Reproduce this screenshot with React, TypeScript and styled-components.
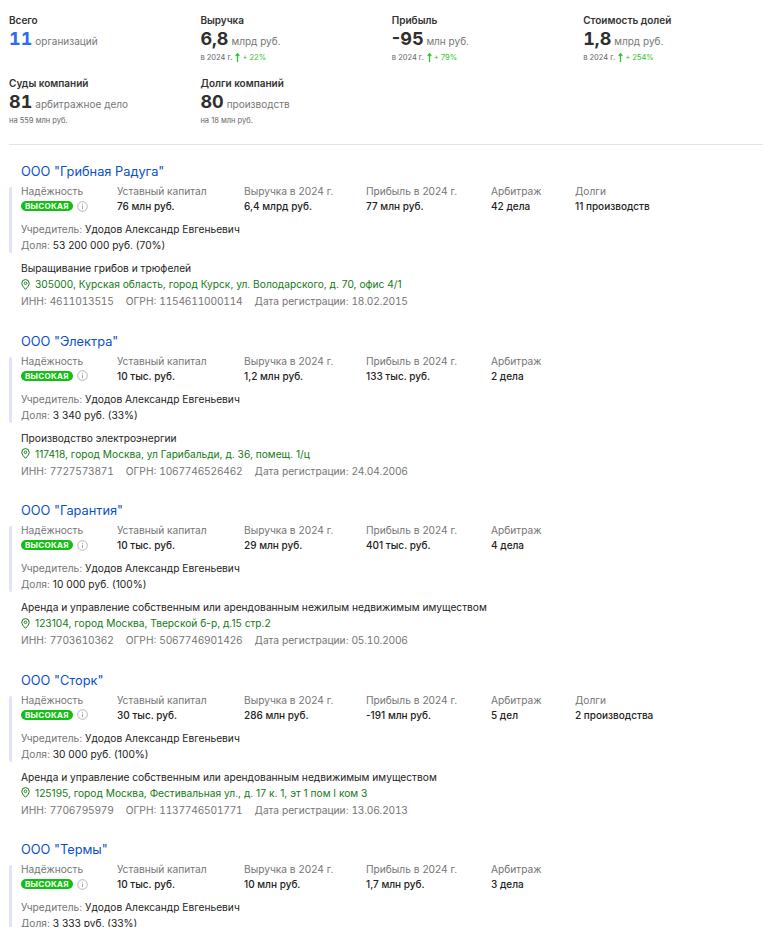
import React from "react";
import styled, { createGlobalStyle } from "styled-components";

const GlobalStyle = createGlobalStyle`
  html, body {
    margin: 0;
    padding: 0;
    background: #fff;
    overflow: hidden;
  }
  body {
    font-family: Inter, "Noto Sans", "Liberation Sans", sans-serif;
    color: #222;
  }
`;

const stats = [
  { label: "Всего", num: "11", unit: "организаций", accent: true },
  { label: "Выручка", num: "6,8", unit: "млрд руб.", year: "в 2024 г.", delta: "+ 22%" },
  { label: "Прибыль", num: "-95", unit: "млн руб.", year: "в 2024 г.", delta: "+ 79%" },
  { label: "Стоимость долей", num: "1,8", unit: "млрд руб.", year: "в 2024 г.", delta: "+ 254%" },
  { label: "Суды компаний", num: "81", unit: "арбитражное дело", year: "на 559 млн руб." },
  { label: "Долги компаний", num: "80", unit: "производств", year: "на 18 млн руб." },
];

const companies = [
  {
    name: 'ООО "Грибная Радуга"', capital: "76 млн руб.", revenue: "6,4 млрд руб.", profit: "77 млн руб.",
    courts: "42 дела", debts: "11 производств", share: "53 200 000 руб. (70%)",
    activity: "Выращивание грибов и трюфелей",
    address: "305000, Курская область, город Курск, ул. Володарского, д. 70, офис 4/1",
    inn: "4611013515", ogrn: "1154611000114", date: "18.02.2015",
  },
  {
    name: 'ООО "Электра"', capital: "10 тыс. руб.", revenue: "1,2 млн руб.", profit: "133 тыс. руб.",
    courts: "2 дела", share: "3 340 руб. (33%)",
    activity: "Производство электроэнергии",
    address: "117418, город Москва, ул Гарибальди, д. 36, помещ. 1/ц",
    inn: "7727573871", ogrn: "1067746526462", date: "24.04.2006",
  },
  {
    name: 'ООО "Гарантия"', capital: "10 тыс. руб.", revenue: "29 млн руб.", profit: "401 тыс. руб.",
    courts: "4 дела", share: "10 000 руб. (100%)",
    activity: "Аренда и управление собственным или арендованным нежилым недвижимым имуществом",
    address: "123104, город Москва, Тверской б-р, д.15 стр.2",
    inn: "7703610362", ogrn: "5067746901426", date: "05.10.2006",
  },
  {
    name: 'ООО "Сторк"', capital: "30 тыс. руб.", revenue: "286 млн руб.", profit: "-191 млн руб.",
    courts: "5 дел", debts: "2 производства", share: "30 000 руб. (100%)",
    activity: "Аренда и управление собственным или арендованным недвижимым имуществом",
    address: "125195, город Москва, Фестивальная ул., д. 17 к. 1, эт 1 пом I ком 3",
    inn: "7706795979", ogrn: "1137746501771", date: "13.06.2013",
  },
  {
    name: 'ООО "Термы"', capital: "10 тыс. руб.", revenue: "10 млн руб.", profit: "1,7 млн руб.",
    courts: "3 дела", share: "3 333 руб. (33%)",
  },
];

const ArrowUp = () => (
  <svg width="5" height="9" viewBox="0 0 5 9" fill="none">
    <path d="M2.5 9V1M.6 2.8 2.5.8l1.9 2" stroke="#27c827" strokeWidth="1.3" />
  </svg>
);

const PinIcon = () => (
  <svg width="9" height="11" viewBox="0 0 9 11" fill="none">
    <path
      d="M4.5 10.3C2.6 8.3.8 6.4.8 4.3a3.7 3.7 0 0 1 7.4 0c0 2.1-1.8 4-3.7 6Z"
      stroke="#157a15"
      strokeWidth="1"
    />
    <circle cx="4.5" cy="4.3" r="1.3" stroke="#157a15" strokeWidth="0.9" />
  </svg>
);

const InfoIcon = () => (
  <svg width="11" height="11" viewBox="0 0 11 11" fill="none">
    <circle cx="5.5" cy="5.5" r="4.8" stroke="#a3a3a3" strokeWidth="0.8" />
    <path d="M5.5 4.8v3.4M5.5 2.8v1" stroke="#a3a3a3" strokeWidth="1" />
  </svg>
);

export default function App() {
  return (
    <Page>
      <GlobalStyle />
      <Summary>
        {stats.map((s) => (
          <Stat key={s.label}>
            <StatLabel>{s.label}</StatLabel>
            <StatValue>
              <StatNum $accent={s.accent} $tabular={!s.num.startsWith("-")}>
                {s.num}
              </StatNum>
              <StatUnit>{s.unit}</StatUnit>
            </StatValue>
            {s.year && (
              <StatSub>
                {s.year}
                {s.delta && (
                  <Delta>
                    <ArrowUp /> {s.delta}
                  </Delta>
                )}
              </StatSub>
            )}
          </Stat>
        ))}
      </Summary>
      <Divider />
      {companies.map((c) => (
        <Card key={c.name}>
          <CompanyName>{c.name}</CompanyName>
          <Marked>
            <Metrics>
              <Metric $w={96}>
                <MetricLabel>Надёжность</MetricLabel>
                <BadgeRow>
                  <Badge>ВЫСОКАЯ</Badge>
                  <InfoIcon />
                </BadgeRow>
              </Metric>
              <Metric $w={127}>
                <MetricLabel>Уставный капитал</MetricLabel>
                <MetricValue>{c.capital}</MetricValue>
              </Metric>
              <Metric $w={122}>
                <MetricLabel>Выручка в 2024 г.</MetricLabel>
                <MetricValue>{c.revenue}</MetricValue>
              </Metric>
              <Metric $w={125}>
                <MetricLabel>Прибыль в 2024 г.</MetricLabel>
                <MetricValue>{c.profit}</MetricValue>
              </Metric>
              <Metric $w={84}>
                <MetricLabel>Арбитраж</MetricLabel>
                <MetricValue>{c.courts}</MetricValue>
              </Metric>
              {c.debts && (
                <Metric $w={110}>
                  <MetricLabel>Долги</MetricLabel>
                  <MetricValue>{c.debts}</MetricValue>
                </Metric>
              )}
            </Metrics>
            <Line>
              <Muted>Учредитель:</Muted> Удодов Александр Евгеньевич
            </Line>
            <Line>
              <Muted>Доля:</Muted> {c.share}
            </Line>
          </Marked>
          {c.activity && (
            <Details>
              <Line>{c.activity}</Line>
              <Address>
                <PinIcon />
                {c.address}
              </Address>
              <Ids>
                <span>
                  ИНН: <Digits>{c.inn}</Digits>
                </span>
                <span>
                  ОГРН: <Digits>{c.ogrn}</Digits>
                </span>
                <span>
                  Дата регистрации: <Digits>{c.date}</Digits>
                </span>
              </Ids>
            </Details>
          )}
        </Card>
      ))}
    </Page>
  );
}

const Page = styled.div`
  width: 767px;
  height: 927px;
  overflow: hidden;
  padding: 14px 4px 0 9px;
  box-sizing: border-box;
`;

const Summary = styled.div`
  display: grid;
  grid-template-columns: repeat(4, 191.4px);
  grid-auto-rows: 62.5px;
`;

const Stat = styled.div`
  display: flex;
  flex-direction: column;
`;

const StatLabel = styled.div`
  font-size: 10px;
  line-height: 13px;
  font-weight: 600;
  color: #333;
`;

const StatValue = styled.div`
  line-height: 22px;
  margin-top: 1px;
  white-space: nowrap;
`;

const StatNum = styled.span<{ $accent?: boolean; $tabular?: boolean }>`
  font-size: 18px;
  font-weight: 700;
  margin-right: 3px;
  font-feature-settings: ${(p) => (p.$tabular ? '"tnum"' : "normal")};
  color: ${(p) => (p.$accent ? "#2f6bf0" : "#2f2f2f")};
`;

const StatUnit = styled.span`
  font-size: 10px;
  color: #777;
`;

const StatSub = styled.div`
  font-size: 7.5px;
  line-height: 11px;
  color: #666;
  display: flex;
  align-items: center;
`;

const Delta = styled.span`
  display: inline-flex;
  align-items: center;
  gap: 2px;
  margin-left: 3px;
  color: #27c827;
`;

const Divider = styled.div`
  height: 1px;
  width: 754px;
  background: #e4e4e4;
  margin-top: 5px;
`;

const Card = styled.section`
  height: 169.5px;
  box-sizing: border-box;
  padding-top: 19px;
`;

const CompanyName = styled.div`
  font-size: 12.8px;
  line-height: 16px;
  color: #0a50c8;
  margin-left: 12px;
`;

const Marked = styled.div`
  margin-top: 7px;
  padding-left: 9px;
  border-left: 3px solid #e0e3fb;
  border-radius: 2px;
`;

const Metrics = styled.div`
  display: flex;
  margin-bottom: 9px;
`;

const Metric = styled.div<{ $w: number }>`
  width: ${(p) => p.$w}px;
  flex: none;
`;

const MetricLabel = styled.div`
  font-size: 10.2px;
  line-height: 9px;
  margin-bottom: 4px;
  color: #757575;
  white-space: nowrap;
`;

const MetricValue = styled.div`
  font-size: 10px;
  font-weight: 500;
  line-height: 12px;
  color: #222;
  white-space: nowrap;
`;

const BadgeRow = styled.div`
  display: flex;
  align-items: center;
  gap: 4px;
  height: 12px;
`;

const Badge = styled.span`
  background: #12bf12;
  color: #fff;
  font-size: 8px;
  font-weight: 700;
  letter-spacing: 0.3px;
  line-height: 10px;
  padding: 0 4px;
  border-radius: 5px;
`;

const Line = styled.div`
  font-size: 10.2px;
  line-height: 16px;
  color: #222;
  white-space: nowrap;
`;

const Muted = styled.span`
  color: #757575;
`;

const Details = styled.div`
  margin: 7px 0 0 12px;
`;

const Address = styled.div`
  display: flex;
  align-items: center;
  gap: 5px;
  font-size: 10.2px;
  line-height: 16px;
  color: #157a15;
  white-space: nowrap;
`;

const Ids = styled.div`
  display: flex;
  gap: 12px;
  font-size: 10.2px;
  line-height: 18px;
  color: #757575;
  white-space: nowrap;
`;

const Digits = styled.span`
  font-feature-settings: "tnum";
  letter-spacing: -0.2px;
`;
